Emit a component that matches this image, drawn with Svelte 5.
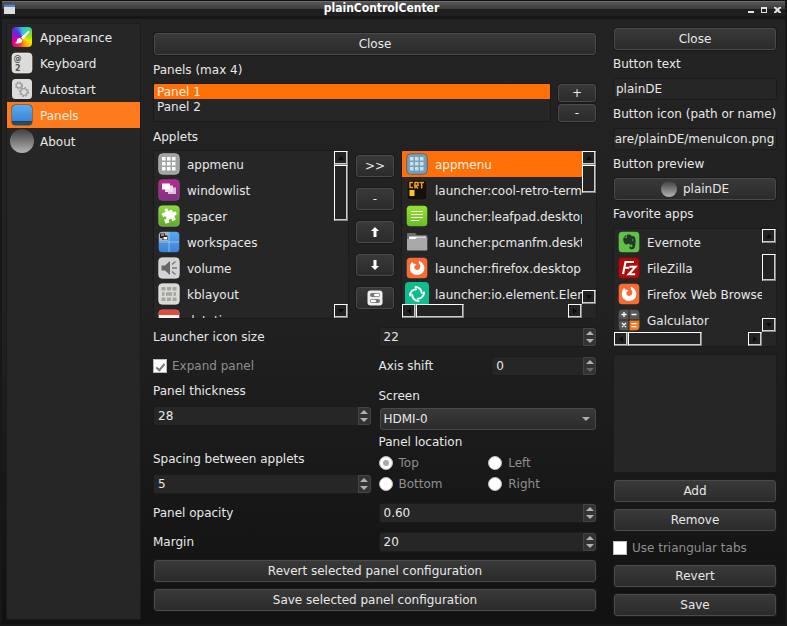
<script>
  const sections = ['Appearance', 'Keyboard', 'Autostart', 'Panels', 'About'];
  const applets = [
    ['grid', 'appmenu'],
    ['windows', 'windowlist'],
    ['puzzle', 'spacer'],
    ['spaces', 'workspaces'],
    ['volume', 'volume'],
    ['keys', 'kblayout'],
    ['calendar', 'datetime']
  ];
  const placed = [
    ['gridblue', 'appmenu'],
    ['crt', 'launcher:cool-retro-term.desktop'],
    ['leafpad', 'launcher:leafpad.desktop'],
    ['folder', 'launcher:pcmanfm.desktop'],
    ['firefox', 'launcher:firefox.desktop'],
    ['element', 'launcher:io.element.Element.desktop']
  ];
  const favorites = [
    ['evernote', 'Evernote'],
    ['filezilla', 'FileZilla'],
    ['firefox', 'Firefox Web Browser'],
    ['calc', 'Galculator']
  ];

  let section = $state('Panels');
  let panel = $state('Panel 1');
  let selectedApplet = $state('appmenu');
  let buttonText = $state('plainDE');
  let iconPath = $state('/usr/share/plainDE/menuIcon.png');

  function showEnd(node) {
    node.scrollLeft = node.scrollWidth;
  }
</script>

{#snippet icon(name)}
  <svg class="icon" viewBox="0 0 22 22" aria-hidden="true">
    {#if name === 'Appearance'}
      <foreignObject x="1" y="1" width="20" height="20"><div class="wheel"></div></foreignObject>
      <path d="M17.5 4.500 10 11.500l2 2.200L18.700 6z" fill="#fff" />
      <path d="M9.300 12.200c-2-.4-3.200.8-3.400 2.400-.1 1-.7 1.900-1.900 2.400 3 1.200 7 .4 7.300-2.700z" fill="#fff" />
    {:else if name === 'Keyboard'}
      <rect x="1" y="1" width="20" height="20" rx="3.500" fill="#dcddd9" stroke="#f3f3f0" stroke-width=".6" />
      <text x="2.500" y="9" font-size="8" font-weight="bold" fill="#555">@</text>
      <text x="4" y="18.500" font-size="8" font-weight="bold" fill="#555">2</text>
    {:else if name === 'Autostart'}
      <rect x="1" y="1" width="20" height="20" rx="3.500" fill="#dcdcdc" />
      <g fill="none" stroke="#8b8b8b">
        <circle cx="8" cy="7.500" r="2.600" />
        <circle cx="8" cy="7.500" r="3.600" stroke-dasharray="1.400 1.430" />
        <circle cx="13" cy="14" r="3.400" />
        <circle cx="13" cy="14" r="4.500" stroke-dasharray="1.700 1.830" />
      </g>
    {:else if name === 'Panels'}
      <defs><linearGradient id="pan" x2="0" y2="1"><stop stop-color="#5cabed" /><stop offset="1" stop-color="#3b87d6" /></linearGradient></defs>
      <rect x=".5" y=".5" width="21" height="21" rx="4" fill="#2c4c61" />
      <path d="M1 17V5a4 4 0 0 1 4-4h12a4 4 0 0 1 4 4v12z" fill="url(#pan)" />
      <path d="M1 17.500h20" stroke="#274252" />
    {:else if name === 'About'}
      <defs><linearGradient id="ball" x2="0" y2="1"><stop stop-color="#3e3e3e" /><stop offset="1" stop-color="#b4b4b4" /></linearGradient></defs>
      <circle cx="11" cy="11" r="12" fill="url(#ball)" />
    {:else if name === 'grid' || name === 'gridblue'}
      <rect x=".7" y=".7" width="20.600" height="20.600" rx="4" fill={name === 'grid' ? '#a1a3a2' : '#7b9cb3'} stroke={name === 'grid' ? '#b4b5b4' : '#4c5d69'} stroke-width=".8" />
      <g fill={name === 'grid' ? '#fff' : '#c1e3f8'}>
        {#each [4, 9, 14] as y}
          {#each [4, 9, 14] as x}<rect {x} {y} width="3.500" height="3.500" />{/each}
        {/each}
      </g>
    {:else if name === 'windows'}
      <defs><linearGradient id="win" x2="0" y2="1"><stop stop-color="#bb2891" /><stop offset="1" stop-color="#813281" /></linearGradient></defs>
      <rect x=".7" y=".7" width="20.600" height="20.600" rx="3.500" fill="url(#win)" stroke="#a04e96" stroke-width=".6" />
      <path d="M10 8.500h8v6.500h-8z" fill="#d8c3d8" /><path d="M7 6.500h8V13H7z" fill="#eadfeb" /><path d="M4 4.500h8v6H4z" fill="#fff" />
    {:else if name === 'puzzle'}
      <defs><linearGradient id="puz" x2="0" y2="1"><stop stop-color="#8ed83a" /><stop offset="1" stop-color="#5da82d" /></linearGradient></defs>
      <rect x=".7" y=".7" width="20.600" height="20.600" rx="3.500" fill="url(#puz)" stroke="#a8df6a" stroke-width=".5" />
      <path transform="rotate(-22 11 11)" d="M5 6h4.500C8.300 4 9.300 3 10.700 3s2.500 1 1.300 3H16v3.500c2-1.200 3 0 3 1.500s-1 2.700-3 1.500V17h-4c.8-2 0-3-1.300-3s-2 1-1.200 3H5v-4.500c2 .8 3 0 3-1.300S7 9.200 5 10z" fill="#fff" />
    {:else if name === 'spaces'}
      <defs><linearGradient id="spc" x2="0" y2="1"><stop stop-color="#5aa8ee" /><stop offset="1" stop-color="#3b82d6" /></linearGradient></defs>
      <rect x=".7" y=".7" width="20.600" height="20.600" rx="3.500" fill="url(#spc)" />
      <path d="M1 10V4.200A3.500 3.500 0 0 1 4.200 1H10v9z" fill="#aeb1b4" />
      <path d="M11 1v20M1 11h20" stroke="#9bcdf5" stroke-width=".8" />
      <path d="M2 2.500h5V7H2zM4.500 4.500h5V9h-5z" fill="#222" /><path d="M3 3.500h3v1H3zM5.500 6h3.500v2.500H5.500z" fill="#fff" />
    {:else if name === 'volume'}
      <rect x=".7" y=".7" width="20.600" height="20.600" rx="3.500" fill="#d4d4d4" stroke="#ebebeb" stroke-width=".6" />
      <path d="M3.500 8.500H7L12 4v14l-5-4.500H3.500z" fill="#666" />
      <path d="M14 7.500l3.500-3M14 11h5M14 14.500l3.500 3" stroke="#777" stroke-width="1.400" />
    {:else if name === 'keys'}
      <rect x=".7" y=".7" width="20.600" height="20.600" rx="3.500" fill="#d9dad5" stroke="#eee" stroke-width=".6" />
      <g fill="#a4a5a1">
        {#each [4, 14.5] as y}
          {#each [3.5, 9, 14.5] as x}<rect {x} {y} width="4" height="3.500" />{/each}
        {/each}
        <path d="M4 9.300h2.500v3.500H4zM8 9.300h6v3.500H8zM15.500 9.300H18v3.500h-2.500z" />
      </g>
    {:else if name === 'calendar'}
      <rect x=".7" y=".7" width="20.600" height="20.600" rx="3.500" fill="#f4f4f4" />
      <path d="M.7 6V4.200A3.500 3.500 0 0 1 4.200.7h13.600a3.500 3.500 0 0 1 3.500 3.500V6z" fill="#e44a3b" />
    {:else if name === 'crt'}
      <rect x="1" y="1" width="20" height="20" rx="3" fill="#16100a" stroke="#3a2a1c" />
      <path d="M7 3.500H4v5h3M9 9.500v-6h3v3H9l3 3M13.500 3.500H18M15.700 3.500v6" fill="none" stroke="#ee9c13" stroke-width="1.500" />
      <rect x="3.500" y="11" width="5" height="6" fill="#ffc21f" />
    {:else if name === 'leafpad'}
      <defs><linearGradient id="leaf" x2="0" y2="1"><stop stop-color="#96e52b" /><stop offset="1" stop-color="#67bd27" /></linearGradient></defs>
      <rect x=".7" y=".7" width="20.600" height="20.600" rx="3.500" fill="url(#leaf)" />
      <path d="M5 6.500h12M5 9.500h12M5 12.500h12M5 15.500h8" stroke="#fff" stroke-width="1.200" />
    {:else if name === 'folder'}
      <path d="M1 8V3a1 1 0 0 1 1-1h7l2 2h9.500a.8.800 0 0 1 .8.800V9z" fill="#6e6e6e" />
      <path d="M3 5.500h17v4H3z" fill="#fff" />
      <path d="M1 8h8l2-1.500h10.300v12a1 1 0 0 1-1 1H2a1 1 0 0 1-1-1z" fill="#a9a9a9" />
    {:else if name === 'firefox'}
      <rect x=".7" y=".7" width="20.600" height="20.600" rx="3.500" fill="#f96b35" />
      <path d="M6.200 4.800c.3 1 .8 1.700 1.700 2 1-.1 1.900.1 2.600.7l-1.800 1.500c-1.200 1.800.5 4 2.600 3.900 2.500-.2 3.700-2.500 2.700-4.800-.5-1.300-1.700-2.200-1.200-4.400 2.800 1 5.600 3.900 5.600 7.300 0 4-3.200 7-7.200 7-4.200 0-7.400-3.100-7.400-7 0-2.400 1-4.500 2.400-6.200z" fill="#fff" />
    {:else if name === 'element'}
      <rect x="-1" y="-1" width="24" height="24" rx="4" fill="#0dbd8b" />
      <g fill="none" stroke="#fff" stroke-width="2" stroke-linecap="round">
        {#each [0, 90, 180, 270] as a}<path transform="rotate({a} 11 11)" d="M9.500 4a6.300 6.300 0 0 1 6.300 6" />{/each}
      </g>
    {:else if name === 'evernote'}
      <rect x=".7" y=".7" width="20.600" height="20.600" rx="3.500" fill="#5fc14a" />
      <path d="M9 3.500V7H5.200C5 10 6 12.500 7.500 13.200c1.500.5 2.700.2 3-.9.500 1.200 1.700 1.400 3 1.500.7 0 1 .4 1 1.200 0 1-.7 1.300-1.400 1.200v-1c-1.400-.2-1.900.7-1.700 1.800.3 1.800 4.300 2 5.300-.5.9-3 1.200-6.500.5-9.800-.3-1.500-2-1.700-3.700-1.800-.7-1.200-2.700-1.500-4.500-1.200zM8.300 3.800 5.500 6.400h2.800z" fill="#25362a" />
      <circle cx="14.700" cy="9" r=".8" fill="#5fc14a" />
    {:else if name === 'filezilla'}
      <rect x=".7" y=".7" width="20.600" height="20.600" rx="3" fill="#b30c0c" stroke="#7d0909" stroke-width=".8" />
      <path d="M5 17 7.500 5H16M6.300 10.700h5M11.500 9.800h6l-6.800 7.400h6.500" fill="none" stroke="#fff" stroke-width="2.100" />
    {:else if name === 'calc'}
      <rect x=".7" y=".7" width="20.600" height="20.600" rx="3.500" fill="#575757" />
      <path d="M11 11h10.300v6.800a3.500 3.500 0 0 1-3.500 3.500H11z" fill="#f37a24" />
      <path d="M11 1v20M1 11h20" stroke="#252525" />
      <path d="M3.500 5.500h5M6 3v5M13.500 5.500h5M4 14l4 4M8 14l-4 4M13.500 14.700h5M13.500 17.700h5" stroke="#fff" stroke-width="1.300" />
    {/if}
  </svg>
{/snippet}

{#snippet barButton(dir)}
  <button type="button" class="bar-btn" aria-label="Scroll {dir}">
    <svg class={dir} viewBox="0 0 6 4" aria-hidden="true"><path d="M0 4 3 0l3 4z" /></svg>
  </button>
{/snippet}

{#snippet spin(id, value, step = '1', atMin = false)}
  <div class="spin">
    <input {id} type="number" {step} {value} />
    <div class="steps">
      <button type="button" aria-label="Increase"><svg viewBox="0 0 8 4" aria-hidden="true"><path d="M0 4 4 0l4 4z" /></svg></button>
      <button type="button" aria-label="Decrease" class:dim={atMin}><svg viewBox="0 0 8 4" aria-hidden="true"><path d="m0 0 4 4 4-4z" /></svg></button>
    </div>
  </div>
{/snippet}

<div class="window">
  <header class="titlebar">
    <svg width="11" height="10" viewBox="0 0 11 10" aria-hidden="true"><rect width="11" height="10" fill="#dcdedb" /><rect width="11" height="3" fill="#5a84bd" /><path d="M0 .5h11" stroke="#34609c" /></svg>
    <h1>plainControlCenter</h1>
    <div class="controls">
      <button type="button" aria-label="Minimize"><svg viewBox="0 0 7 7"><path d="M0 5h6v2H0z" /></svg></button>
      <button type="button" aria-label="Maximize"><svg viewBox="0 0 7 7"><path fill-rule="evenodd" d="M0 1h6v6H0zM1 3v3h4V3z" /></svg></button>
      <button type="button" aria-label="Close window"><svg viewBox="0 0 7 7"><path d="M0 1h2l1.500 1.500L5 1h2v1L5 4l2 2v1H5L3.500 5.500 2 7H0V6l2-2-2-2z" /></svg></button>
    </div>
  </header>

  <div class="body">
    <nav class="box sidebar" aria-label="Sections">
      {#each sections as s}
        <button type="button" class="item" class:active={section === s} onclick={() => (section = s)}>{@render icon(s)}<span>{s}</span></button>
      {/each}
    </nav>

    <main class="stack">
      <button type="button" class="btn">Close</button>
      <h2>Panels (max 4)</h2>
      <div class="panels">
        <div class="box plain">
          {#each ['Panel 1', 'Panel 2'] as p}
            <button type="button" class="line" class:active={panel === p} onclick={() => (panel = p)}>{p}</button>
          {/each}
        </div>
        <div class="pair">
          <button type="button" class="btn">+</button>
          <button type="button" class="btn">-</button>
        </div>
      </div>

      <h2>Applets</h2>
      <div class="applets">
        <div class="box scroller tall">
          <div class="items">
            {#each applets as [i, name]}
              <button type="button" class="item">{@render icon(i)}<span>{name}</span></button>
            {/each}
          </div>
          <div class="vbar">{@render barButton('up')}<div class="track"><div class="thumb" style:flex-grow="55"></div><div style:flex-grow="84"></div></div>{@render barButton('down')}</div>
        </div>
        <div class="moves">
          <button type="button" class="btn">&gt;&gt;</button>
          <button type="button" class="btn">-</button>
          <button type="button" class="btn" aria-label="Move up"><svg width="8" height="10" viewBox="0 0 8 10"><path d="m4 0 4 4H5.500v6h-3V4H0z" fill="#fff" /></svg></button>
          <button type="button" class="btn" aria-label="Move down"><svg width="8" height="10" viewBox="0 0 8 10"><path d="m4 10 4-4H5.500V0h-3v6H0z" fill="#fff" /></svg></button>
          <button type="button" class="btn" aria-label="Applet settings">
            <svg width="16" height="16" viewBox="0 0 16 16"><rect x=".5" y=".5" width="15" height="15" rx="3" fill="#ededed" /><rect x="3" y="3" width="10" height="4" rx="2" fill="#777" /><rect x="3" y="9" width="10" height="4" rx="2" fill="#777" /><rect x="7" y="3.800" width="5.300" height="2.400" rx="1.200" fill="#fff" /><rect x="3.700" y="9.800" width="5.300" height="2.400" rx="1.200" fill="#fff" /></svg>
          </button>
        </div>
        <div class="box scroller both tall">
          <div class="items">
            {#each placed as [i, name]}
              <button type="button" class="item" class:active={selectedApplet === name} onclick={() => (selectedApplet = name)}>{@render icon(i)}<span>{name}</span></button>
            {/each}
          </div>
          <div class="vbar">{@render barButton('up')}<div class="track"><div class="thumb" style:flex-grow="26"></div><div style:flex-grow="98"></div></div>{@render barButton('down')}</div>
          <div class="hbar">{@render barButton('left')}<div class="track"><div class="thumb" style:flex-grow="47"></div><div style:flex-grow="105"></div></div>{@render barButton('right')}</div>
        </div>
      </div>

      <div class="halves row">
        <label for="icon-size">Launcher icon size</label>
        {@render spin('icon-size', '22')}
      </div>
      <div class="halves row">
        <label class="check"><input type="checkbox" checked /><span>Expand panel</span></label>
        <div class="halves">
          <label for="axis">Axis shift</label>
          {@render spin('axis', '0', '1', true)}
        </div>
      </div>

      <div class="halves geometry">
        <div class="sizes">
          <div class="field"><label for="thick">Panel thickness</label>{@render spin('thick', '28')}</div>
          <div class="field"><label for="spacing">Spacing between applets</label>{@render spin('spacing', '5')}</div>
        </div>
        <div class="placement">
          <label for="screen">Screen</label>
          <div class="select">
            <select id="screen"><option>HDMI-0</option></select>
            <svg viewBox="0 0 8 4" aria-hidden="true"><path d="m0 0 4 4 4-4z" /></svg>
          </div>
          <fieldset>
            <legend>Panel location</legend>
            <div class="radios">
              {#each ['Top', 'Left', 'Bottom', 'Right'] as place}
                <label class="check"><input type="radio" name="place" checked={place === 'Top'} /><span>{place}</span></label>
              {/each}
            </div>
          </fieldset>
        </div>
      </div>

      <div class="halves row">
        <label for="opacity">Panel opacity</label>
        {@render spin('opacity', '0.60', '0.01')}
      </div>
      <div class="halves row">
        <label for="margin">Margin</label>
        {@render spin('margin', '20')}
      </div>
      <button type="button" class="btn">Revert selected panel configuration</button>
      <button type="button" class="btn">Save selected panel configuration</button>
    </main>

    <aside class="stack">
      <button type="button" class="btn">Close</button>
      <label for="btext">Button text</label>
      <input id="btext" class="text" type="text" bind:value={buttonText} />
      <label for="bicon">Button icon (path or name)</label>
      <input id="bicon" class="text path" type="text" bind:value={iconPath} use:showEnd />
      <h2>Button preview</h2>
      <button type="button" class="btn preview"><span class="ball"></span>{buttonText}</button>
      <h2>Favorite apps</h2>
      <div class="box scroller both favs">
        <div class="items">
          {#each favorites as [i, name]}
            <button type="button" class="item">{@render icon(i)}<span>{name}</span></button>
          {/each}
        </div>
        <div class="vbar">{@render barButton('up')}<div class="track"><div style:flex-grow="11"></div><div class="thumb" style:flex-grow="26"></div><div style:flex-grow="38"></div></div>{@render barButton('down')}</div>
        <div class="hbar">{@render barButton('left')}<div class="track"><div class="thumb" style:flex-grow="73"></div><div style:flex-grow="47"></div></div>{@render barButton('right')}</div>
      </div>
      <div class="box details"></div>
      <button type="button" class="btn">Add</button>
      <button type="button" class="btn">Remove</button>
      <label class="check tabs"><input type="checkbox" /><span>Use triangular tabs</span></label>
      <button type="button" class="btn">Revert</button>
      <button type="button" class="btn">Save</button>
    </aside>
  </div>
</div>

<style>
  :global(body) {
    margin: 0;
    background: #111;
  }
  .window {
    box-sizing: border-box;
    min-height: 100vh;
    display: flex;
    flex-direction: column;
    font: 12px/14px 'DejaVu Sans', sans-serif;
    color: #e8e8e8;
    background: linear-gradient(#232323, #212121 50%, #111);
    border: solid #171717;
    border-width: 0 2px 2px;
  }
  .window *,
  .window *::before {
    box-sizing: border-box;
  }
  button,
  input,
  select {
    font: inherit;
    color: inherit;
    margin: 0;
    padding: 0;
    border: 0;
    border-radius: 0;
    background: none;
    appearance: none;
    min-width: 0;
  }
  h1,
  h2 {
    margin: 0;
    font: inherit;
  }
  label,
  h2 {
    white-space: nowrap;
  }
  svg {
    display: block;
    flex: none;
    overflow: visible;
  }

  .titlebar {
    height: 19px;
    padding: 0 4px 1px 2px;
    display: flex;
    align-items: center;
    background: linear-gradient(#111 1px, #6c6c6c 1px, #6c6c6c 2px, #555 2px, #3c3c3c 9px, #1f1f1f 9px, #1f1f1f 16px, #161616 16px);
  }
  h1 {
    flex: 1;
    text-align: center;
    font: bold 12px/16px 'DejaVu Sans Condensed', 'DejaVu Sans', sans-serif;
    padding-bottom: 2px;
    color: #fff;
  }
  .controls {
    display: flex;
    justify-content: flex-end;
    gap: 6px;
  }
  .controls svg {
    width: 7px;
    height: 7px;
    fill: #e4e4e4;
  }

  .body {
    flex: 1;
    display: flex;
    padding: 4px 8px 4px 4px;
  }
  .box {
    border: 1px solid #1b1b1b;
    background: #262626;
    border-radius: 2px;
    overflow: hidden;
  }
  .sidebar {
    flex: 0 0 135px;
  }
  .item {
    display: flex;
    align-items: center;
    gap: 7px;
    width: 100%;
    height: 26px;
    padding-left: 4px;
    text-align: left;
    white-space: nowrap;
  }
  .item span {
    padding-top: 2px;
  }
  .icon {
    width: 22px;
    height: 22px;
  }
  .wheel {
    height: 20px;
    border-radius: 4px;
    background: conic-gradient(from 0deg, #35b9e8, #38d7a0, #8be000, #f7e600, #ff9900, #f5204e, #e3008f, #9b12c8, #4c36dc, #35b9e8);
  }
  .active {
    background: #ff7008;
    color: #fff0e0;
  }
  .sidebar .active {
    background: #ff7a1c;
  }

  .stack {
    display: flex;
    flex-direction: column;
    gap: 7px;
  }
  main {
    flex: 1;
    min-width: 0;
    margin: 0 16px 0 12px;
    padding: 10px 0 9px;
  }
  main > h2 {
    height: 14px;
    line-height: 16px;
  }
  aside {
    flex: 0 0 164px;
    padding: 5px 0 4px;
  }
  .btn {
    height: 22px;
    flex: none;
    margin: 0 1px;
    display: flex;
    align-items: center;
    justify-content: center;
    gap: 6px;
    border: 1px solid #4a4a4a;
    border-radius: 3px;
    background: linear-gradient(#393939, #2b2b2b);
    box-shadow: 0 0 0 1px #1a1a1a;
  }
  .panels {
    display: flex;
    gap: 6px;
    height: 39px;
  }
  .plain {
    flex: 1;
  }
  .line {
    display: block;
    width: 100%;
    height: 15px;
    line-height: 17px;
    padding-left: 3px;
    text-align: left;
  }
  .pair {
    width: 40px;
    padding-top: 1px;
    display: flex;
    flex-direction: column;
    gap: 2px;
  }
  .pair .btn {
    height: 18px;
  }

  .applets {
    display: grid;
    grid-template-columns: minmax(0, 1fr) 38px minmax(0, 1fr);
    gap: 7px;
  }
  .moves {
    display: flex;
    flex-direction: column;
    gap: 11px;
    padding-top: 5px;
  }
  .moves .btn {
    margin: 0;
  }
  .scroller {
    display: grid;
    grid-template: minmax(0, 1fr) / minmax(0, 1fr) 14px;
  }
  .both {
    grid-template-rows: minmax(0, 1fr) 14px;
  }
  .tall {
    height: 169px;
  }
  .favs {
    height: 119px;
  }
  .items {
    overflow: hidden;
  }
  .vbar,
  .hbar,
  .track {
    display: flex;
    min-height: 0;
    min-width: 0;
  }
  .vbar,
  .vbar .track {
    flex-direction: column;
  }
  .track {
    flex: 1;
  }
  .track > div {
    flex-basis: 0;
  }
  .bar-btn {
    flex: none;
    width: 14px;
    height: 14px;
    display: grid;
    place-items: center;
  }
  .bar-btn,
  .thumb {
    border: 1px solid;
    border-color: #fff #888 #888 #fff;
    box-shadow: inset -1px -1px #ccc;
    background: #232323;
  }
  .bar-btn svg {
    width: 6px;
    height: 4px;
    fill: #0c0c0c;
  }
  .down {
    transform: rotate(180deg);
  }
  .left {
    transform: rotate(-90deg);
  }
  .right {
    transform: rotate(90deg);
  }

  .halves {
    display: grid;
    grid-template-columns: minmax(0, 1fr) minmax(0, 1fr);
    gap: 7px;
    align-items: center;
  }
  .row {
    height: 22px;
  }
  .spin {
    height: 20px;
    display: flex;
    background: #262626;
    border: 1px solid #1b1b1b;
    border-radius: 3px;
  }
  .spin input {
    flex: 1;
    padding-left: 4px;
    appearance: textfield;
    -moz-appearance: textfield;
  }
  .spin input::-webkit-inner-spin-button {
    appearance: none;
    display: none;
  }
  .steps {
    width: 13px;
    display: flex;
    flex-direction: column;
    background: #333;
    border: 1px solid #444;
    border-radius: 0 3px 3px 0;
  }
  .steps button {
    flex: 1;
    display: grid;
    place-items: center;
  }
  .steps svg,
  .select svg {
    width: 8px;
    height: 4px;
    fill: #b0b0b0;
  }
  .steps .dim svg {
    fill: #666;
  }
  .check {
    display: flex;
    align-items: center;
    gap: 5px;
    color: #8f8f8f;
  }
  .check input {
    width: 14px;
    height: 14px;
    flex: none;
    background: #fff;
    border: 1px solid #bbb;
    display: grid;
    place-items: center;
  }
  .check input[type='radio'] {
    border-radius: 50%;
  }
  .check input[type='radio']:checked::before {
    content: '';
    width: 6px;
    height: 6px;
    border-radius: 50%;
    background: #aaa;
  }
  .check input[type='checkbox']:checked::before {
    content: '';
    width: 5px;
    height: 9px;
    border: solid #777;
    border-width: 0 2px 2px 0;
    transform: rotate(40deg);
  }
  .geometry {
    height: 111px;
    align-items: stretch;
  }
  .sizes {
    display: flex;
    flex-direction: column;
    gap: 26px;
  }
  .field {
    display: flex;
    flex-direction: column;
    gap: 8px;
  }
  .placement {
    display: flex;
    flex-direction: column;
    gap: 5px;
    padding-top: 5px;
  }
  .select {
    display: grid;
    align-items: center;
    margin: 0 1px;
  }
  .select > * {
    grid-area: 1 / 1;
  }
  .select svg {
    justify-self: end;
    margin-right: 6px;
    pointer-events: none;
  }
  select {
    height: 22px;
    padding: 0 3px;
    border: 1px solid #4a4a4a;
    border-radius: 3px;
    background: linear-gradient(#393939, #2b2b2b);
  }
  fieldset {
    margin: 0;
    padding: 0;
    border: 0;
    min-width: 0;
  }
  legend {
    padding: 0;
  }
  .radios {
    display: grid;
    grid-template-columns: 1fr 1fr;
    gap: 7px 1px;
    padding-top: 7px;
  }
  .radios .check {
    gap: 6px;
  }
  .text {
    height: 22px;
    flex: none;
    padding: 0 2px;
    background: #262626;
    border: 1px solid #1b1b1b;
    border-radius: 3px;
  }
  .path {
    padding-left: 0;
  }
  .ball {
    width: 16px;
    height: 16px;
    border-radius: 50%;
    background: linear-gradient(#3e3e3e, #b4b4b4);
  }
  .details {
    flex: 1;
    min-height: 60px;
  }
  .tabs {
    height: 20px;
  }
</style>
